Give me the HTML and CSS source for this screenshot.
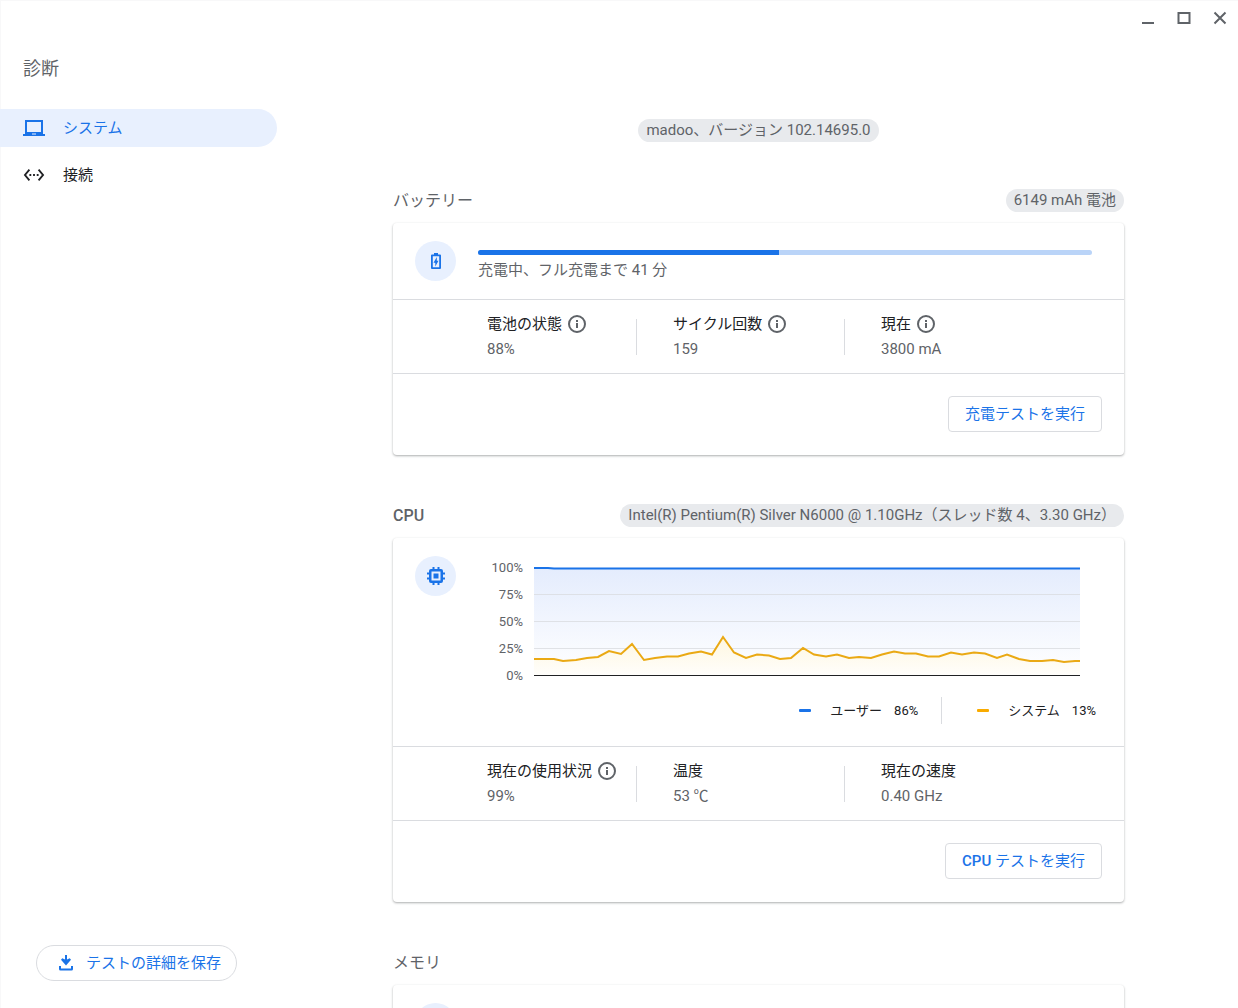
FILE: index.html
```html
<!DOCTYPE html>
<html lang="ja">
<head>
  <meta charset="UTF-8">
  <meta name="viewport" content="width=device-width, initial-scale=1.0">
  <title>診断</title>
  <link rel="stylesheet" href="styles.css">
</head>
<body>
  <div class="window">
    <!-- Window controls -->
    <div class="title-bar">
      <button class="window-button" type="button" aria-label="最小化">
        <svg width="14" height="14" viewBox="0 0 14 14"><path d="M1 11h12v2H1z"/></svg>
      </button>
      <button class="window-button" type="button" aria-label="最大化">
        <svg width="14" height="14" viewBox="0 0 14 14"><path fill-rule="evenodd" d="M.5 1h13v12H.5zM2.500 3v8h9V3z"/></svg>
      </button>
      <button class="window-button" type="button" aria-label="閉じる">
        <svg width="14" height="14" viewBox="0 0 14 14"><path class="stroke" d="M1.500 1.500l11 11M12.500 1.500l-11 11"/></svg>
      </button>
    </div>

    <!-- Sidebar -->
    <aside class="sidebar">
      <h1>診断</h1>
      <nav class="nav">
        <a class="nav-item active" href="#system">
          <svg width="22" height="22" viewBox="0 0 22 22"><path fill-rule="evenodd" d="M2 3h18v14h2v2H0v-2h2zM4 5v10h14V5zM9 16.500v1h4v-1z"/></svg>
          システム
        </a>
        <a class="nav-item" href="#connectivity">
          <svg width="22" height="22" viewBox="0 0 24 24"><path d="M7.770 6.760L6.230 5.480.82 12l5.410 6.520 1.540-1.280L3.420 12l4.350-5.240zM7 13h2v-2H7v2zm10-2h-2v2h2v-2zm-6 2h2v-2h-2v2zm6.770-7.520l-1.540 1.280L20.580 12l-4.350 5.240 1.540 1.280L23.180 12l-5.410-6.520z"/></svg>
          接続
        </a>
      </nav>
      <button class="save-button" type="button">
        <svg width="16" height="16" viewBox="0 0 16 16"><path d="M7 0h2v4.500l2.700-1.200 1.300 1.400L8 10.500 3 4.700l1.300-1.400L7 4.500zM1 11h2v2.500h10V11h2v3q0 1.500-1.500 1.500h-11Q1 15.500 1 14z"/></svg>
        テストの詳細を保存
      </button>
    </aside>

    <!-- System page -->
    <main class="content" id="system">
      <div class="overview"><span class="chip">madoo、バージョン 102.14695.0</span></div>

      <section class="section">
        <div class="section-header">
          <h2>バッテリー</h2>
          <span class="chip">6149 mAh 電池</span>
        </div>
        <div class="card">
          <div class="card-top battery">
            <span class="card-icon">
              <svg width="20" height="20" viewBox="0 0 20 20"><path fill-rule="evenodd" d="M8 2h4v1.500h2q1 0 1 1V17q0 1-1 1H6q-1 0-1-1V4.500q0-1 1-1h2zM6.800 5.300v10.900h6.400V5.300zM10.800 6v3.800h1.700L9.300 15.500v-3.800H7.500z"/></svg>
            </span>
            <div class="charge">
              <progress id="charge" value="49" max="100"></progress>
              <label for="charge">充電中、フル充電まで 41 分</label>
            </div>
          </div>
          <dl class="stats">
            <div class="stat">
              <dt>電池の状態 <svg class="info" width="20" height="20" viewBox="0 0 20 20"><circle cx="10" cy="10" r="8"/><path d="M9 9h2v5H9zM9 6h2v2H9z"/></svg></dt>
              <dd>88%</dd>
            </div>
            <div class="stat">
              <dt>サイクル回数 <svg class="info" width="20" height="20" viewBox="0 0 20 20"><circle cx="10" cy="10" r="8"/><path d="M9 9h2v5H9zM9 6h2v2H9z"/></svg></dt>
              <dd>159</dd>
            </div>
            <div class="stat">
              <dt>現在 <svg class="info" width="20" height="20" viewBox="0 0 20 20"><circle cx="10" cy="10" r="8"/><path d="M9 9h2v5H9zM9 6h2v2H9z"/></svg></dt>
              <dd>3800 mA</dd>
            </div>
          </dl>
          <div class="card-actions"><button class="test-button" type="button">充電テストを実行</button></div>
        </div>
      </section>

      <section class="section">
        <div class="section-header">
          <h2><span class="latin">CPU</span></h2>
          <span class="chip">Intel(R) Pentium(R) Silver N6000 @ 1.10GHz（スレッド数 4、3.30 GHz）</span>
        </div>
        <div class="card">
          <div class="card-top cpu">
            <span class="card-icon">
              <svg width="20" height="20" viewBox="0 0 20 20"><path fill-rule="evenodd" d="M6.500 1h2v2h3V1h2v2H15q2 0 2 2v1.500h2v2h-2v3h2v2h-2V15q0 2-2 2h-1.500v2h-2v-2h-3v2h-2v-2H5q-2 0-2-2v-1.500H1v-2h2v-3H1v-2h2V5q0-2 2-2h1.500zM5.500 5.500v9h9v-9zM7.500 7.500h5v5h-5z"/></svg>
            </span>
            <div class="usage">
              <div class="chart">
                <div class="axis">
                  <span>100%</span>
                  <span>75%</span>
                  <span>50%</span>
                  <span>25%</span>
                  <span>0%</span>
                </div>
                <svg class="plot" viewBox="0 0 546 109" preserveAspectRatio="none">
                  <defs>
                    <linearGradient id="user-fill" x1="0" y1="0" x2="0" y2="1">
                      <stop offset="0" stop-color="#e4ecfd"/>
                      <stop offset="1" stop-color="#fff"/>
                    </linearGradient>
                    <linearGradient id="system-fill" x1="0" y1="0" x2="0" y2="1">
                      <stop offset="0" stop-color="#fef7e0"/>
                      <stop offset="1" stop-color="#fffefb"/>
                    </linearGradient>
                  </defs>
                  <path fill="url(#user-fill)" d="M0 1H546V108H0z"/>
                  <path class="grid-line" d="M0 27.500H546M0 54.500H546M0 81.500H546"/>
                  <path fill="url(#system-fill)" d="M0 92H20L29 94 42 93 53 91 64 90 75 84 87 87 98 77 110 93 121 91 133 89.500 144 89.500 155 86.500 167 84.500 178 87.500 189 70 200 85.500 212 91 223 87.500 235 88.500 246 92 257 91 269 81 280 87.500 292 89.500 303 87.500 315 91 325 90 337 91 348 87.500 360 84.500 371 86.500 382 86.500 394 89.500 405 89.500 417 85.500 428 87.500 440 85.500 451 86.500 463 91 473 87.500 485 92 496 94 508 94 519 93 530 95 541 94 546 94V108H0z"/>
                  <path class="line user" d="M0 1H14L20 1.500H546"/>
                  <path class="line system" d="M0 92H20L29 94 42 93 53 91 64 90 75 84 87 87 98 77 110 93 121 91 133 89.500 144 89.500 155 86.500 167 84.500 178 87.500 189 70 200 85.500 212 91 223 87.500 235 88.500 246 92 257 91 269 81 280 87.500 292 89.500 303 87.500 315 91 325 90 337 91 348 87.500 360 84.500 371 86.500 382 86.500 394 89.500 405 89.500 417 85.500 428 87.500 440 85.500 451 86.500 463 91 473 87.500 485 92 496 94 508 94 519 93 530 95 541 94 546 94"/>
                  <path class="base-line" d="M0 108.500H546"/>
                </svg>
              </div>
              <div class="legend">
                <span class="legend-item user"><span>ユーザー</span><span>86%</span></span>
                <span class="legend-item system"><span>システム</span><span>13%</span></span>
              </div>
            </div>
          </div>
          <dl class="stats">
            <div class="stat">
              <dt>現在の使用状況 <svg class="info" width="20" height="20" viewBox="0 0 20 20"><circle cx="10" cy="10" r="8"/><path d="M9 9h2v5H9zM9 6h2v2H9z"/></svg></dt>
              <dd>99%</dd>
            </div>
            <div class="stat">
              <dt>温度</dt>
              <dd>53 ℃</dd>
            </div>
            <div class="stat">
              <dt>現在の速度</dt>
              <dd>0.40 GHz</dd>
            </div>
          </dl>
          <div class="card-actions"><button class="test-button" type="button"><span class="latin">CPU</span> テストを実行</button></div>
        </div>
      </section>

      <section class="section">
        <div class="section-header">
          <h2>メモリ</h2>
        </div>
        <div class="card">
          <div class="card-top">
            <span class="card-icon"></span>
          </div>
        </div>
      </section>
    </main>
  </div>
</body>
</html>
```
FILE: styles.css
```css
/* General Styles */
* {
  box-sizing: border-box;
}

body {
  margin: 0;
  font-family: Roboto, 'Noto Sans CJK JP', sans-serif;
  font-size: 15px;
  line-height: 20px;
  color: #5f6368;
  background: #fff;
}

button {
  font: inherit;
  cursor: pointer;
}

svg {
  display: block;
  flex: none;
  fill: currentColor;
}

.stroke {
  fill: none;
  stroke: currentColor;
  stroke-width: 2;
}

.latin {
  font-weight: 500;
}

.window {
  display: grid;
  grid-template-columns: 279px 1fr;
  grid-template-rows: 36px 1fr;
  height: 100vh;
  overflow: hidden;
  box-shadow: inset 1px 1px #f8f8f9;
}

.title-bar {
  grid-column: 1 / -1;
  display: flex;
  justify-content: flex-end;
}

.window-button {
  display: flex;
  align-items: center;
  justify-content: center;
  width: 36px;
  padding: 0;
  border: none;
  color: #5f6368;
  background: none;
}

/* Sidebar */
.sidebar {
  display: flex;
  flex-direction: column;
  align-items: flex-start;
  padding: 21px 2px 27px 0;
}

.sidebar h1 {
  margin: 0 0 28px;
  padding-left: 23px;
  font-size: 18px;
  font-weight: 400;
  line-height: 24px;
}

.nav {
  display: flex;
  flex-direction: column;
  gap: 9px;
  width: 100%;
}

.nav-item {
  display: flex;
  align-items: center;
  gap: 18px;
  height: 38px;
  padding-left: 23px;
  border-radius: 0 19px 19px 0;
  color: #202124;
  text-decoration: none;
}

.nav-item.active {
  color: #1a73e8;
  background: #e8f0fe;
}

.save-button {
  display: flex;
  align-items: center;
  gap: 12px;
  height: 36px;
  margin: auto 0 0 36px;
  padding: 0 15px 0 21px;
  border: 1px solid #dadce0;
  border-radius: 18px;
  color: #1a73e8;
  background: #fff;
}

/* Content */
.content {
  min-width: 0;
  padding: 83px 114px 0;
  overflow-y: auto;
  scrollbar-width: none;
}

.overview {
  display: flex;
  justify-content: center;
  margin-bottom: 47px;
}

.chip {
  padding: 0 8px;
  border-radius: 12px;
  line-height: 23px;
  background: #e8eaed;
}

.section {
  margin-bottom: 49px;
}

.section-header {
  display: flex;
  align-items: center;
  justify-content: space-between;
  height: 23px;
  margin-bottom: 11px;
}

.section-header h2 {
  margin: 0;
  font-size: 16px;
  font-weight: 400;
}

.card {
  border-radius: 4px;
  background: #fff;
  box-shadow: 0 1px 2px rgba(60, 64, 67, 0.3), 0 1px 3px rgba(60, 64, 67, 0.15);
}

.card-top {
  display: flex;
  gap: 22px;
  padding: 18px 32px 18px 22px;
}

.card-icon {
  display: flex;
  align-items: center;
  justify-content: center;
  flex: none;
  width: 41px;
  height: 40px;
  border-radius: 50%;
  color: #1a73e8;
  background: #e8f0fe;
}

.charge {
  flex: 1;
  padding-top: 9px;
}

.charge progress {
  display: block;
  width: 100%;
  height: 5px;
  margin-bottom: 5px;
  border: none;
  border-radius: 3px;
  overflow: hidden;
  appearance: none;
  background: #bad4f8;
}

.charge progress::-webkit-progress-bar {
  background: #bad4f8;
}

.charge progress::-webkit-progress-value {
  background: #1a73e8;
}

.charge label {
  display: block;
}

/* Stats */
.stats {
  display: grid;
  grid-template-columns: 150fr 208fr 208fr;
  align-items: center;
  height: 75px;
  margin: 0;
  padding: 0 71px 0 94px;
  border-top: 1px solid #dadce0;
  border-bottom: 1px solid #dadce0;
}

.stat {
  display: flex;
  flex-direction: column;
  justify-content: center;
  gap: 5px;
  height: 36px;
  white-space: nowrap;
}

.stat + .stat {
  padding-left: 36px;
}

.stat:not(:last-child) {
  border-right: 1px solid #dadce0;
}

.stat dt {
  display: flex;
  align-items: center;
  gap: 5px;
  color: #202124;
}

.stat dd {
  margin: 0;
}

.info {
  color: #5f6368;
}

.info circle {
  fill: none;
  stroke: currentColor;
  stroke-width: 2;
}

.card-actions {
  display: flex;
  justify-content: flex-end;
  padding: 22px 22px 23px;
}

.test-button {
  height: 36px;
  padding: 0 16px;
  border: 1px solid #dadce0;
  border-radius: 4px;
  color: #1a73e8;
  background: #fff;
}

/* CPU chart */
.cpu {
  padding: 18px 28px 22px 22px;
}

.usage {
  flex: 1;
  font-size: 13px;
}

.chart {
  display: flex;
  margin-top: -2px;
}

.axis {
  display: flex;
  flex-direction: column;
  width: 56px;
  padding-right: 11px;
  line-height: 27px;
  text-align: right;
}

.plot {
  flex: 1;
  min-width: 0;
  height: 109px;
  margin: 13px 16px 0 0;
}

.grid-line {
  fill: none;
  stroke: #dadce0;
  stroke-opacity: 0.8;
}

.base-line {
  fill: none;
  stroke: #202124;
}

.line {
  fill: none;
  stroke-width: 2;
}

.line.user {
  stroke: #1a73e8;
}

.line.system {
  stroke: #eaa914;
}

.legend {
  display: flex;
  justify-content: flex-end;
  margin-top: 8px;
  color: #202124;
}

.legend-item {
  display: flex;
  align-items: center;
  gap: 12px;
  height: 27px;
}

.legend-item::before {
  content: '';
  width: 12px;
  height: 3px;
  margin-right: 7px;
  border-radius: 1px;
  background: #1a73e8;
}

.legend-item.system {
  margin-left: 23px;
  padding-left: 35px;
  border-left: 1px solid #dadce0;
}

.legend-item.system::before {
  background: #f9ab00;
}
```
